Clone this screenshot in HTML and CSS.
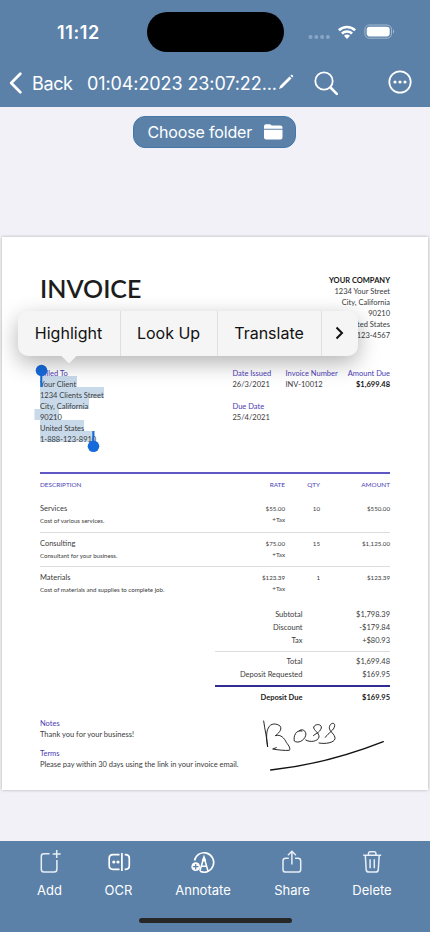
FILE: index.html
```html
<!DOCTYPE html>
<html lang="en">
<head>
<meta charset="utf-8">
<title>Invoice scan</title>
<link rel="stylesheet" href="styles.css">
</head>
<body>
<div class="app">
  <header class="top">
    <div class="status">
      <span class="clock">11:12</span>
      <span class="island"></span>
      <svg class="signals" width="90" height="20" viewBox="0 0 90 20">
        <g fill="#8aa6c6"><circle cx="3.5" cy="15" r="2"/><circle cx="9.3" cy="15" r="2"/><circle cx="15.1" cy="15" r="2"/><circle cx="20.9" cy="15" r="2"/></g>
        <g fill="none" stroke="#fff" stroke-width="2.6"><path d="M31.9 8.2a11.8 11.8 0 0 1 16.2 0"/><path d="M34.9 11.5a7.4 7.4 0 0 1 10.2 0"/></g>
        <path d="M40 17l-3-3.2a4.2 4.2 0 0 1 6 0z" fill="#fff"/>
        <rect x="57.9" y="3" width="26.6" height="13.2" rx="4.3" fill="none" stroke="#a3b9d1"/>
        <rect x="59.7" y="4.8" width="23" height="9.6" rx="2.8" fill="#fff"/>
        <path d="M86 7.6c1.6.5 1.6 3.5 0 4z" fill="#a3b9d1"/>
      </svg>
    </div>
    <nav class="nav">
      <svg class="chev" width="14" height="22" viewBox="0 0 14 22"><path d="M11.3 1.8L2.2 11l9.1 9.2" fill="none" stroke="#fff" stroke-width="2.7" stroke-linecap="round" stroke-linejoin="round"/></svg>
      <span class="back">Back</span>
      <span class="title">01:04:2023 23:07:22...</span>
      <svg class="pencil" width="16" height="16" viewBox="0 0 16 16"><path d="M1 15l1.2-3.2L11.5 2.5l2 2L4.2 13.8zM12.3 1.7l.9-.9c.9-.7 2.6.9 1.9 1.9l-.8.9z" fill="#fff"/></svg>
      <svg class="search" width="25" height="25" viewBox="0 0 25 25"><circle cx="10" cy="10" r="8.7" fill="none" stroke="#fff" stroke-width="1.8"/><path d="M16.5 16.5l6.3 6.3" stroke="#fff" stroke-width="2.6" stroke-linecap="round"/></svg>
      <svg class="more" width="24" height="24" viewBox="0 0 24 24"><circle cx="12" cy="12" r="10.7" fill="none" stroke="#fff" stroke-width="1.7"/><g fill="#fff"><circle cx="7" cy="12" r="1.6"/><circle cx="12" cy="12" r="1.6"/><circle cx="17" cy="12" r="1.6"/></g></svg>
    </nav>
  </header>

  <main class="stage">
    <button class="folder"><span>Choose folder</span>
      <svg width="19" height="16" viewBox="0 0 19 16"><path d="M0 4.7V2.3Q0 .3 2 .3h3.7q.8 0 1.4.6l.6.6h8.700q2.100 0 2.100 2.100v1.100zM0 5.700h18.500v7.800q0 2.100-2.100 2.100H2.100Q0 15.600 0 13.500z" fill="#fff"/></svg>
    </button>

    <article class="paper">
      <section class="head">
        <h1>INVOICE</h1>
        <address><b>YOUR COMPANY</b><br>1234 Your Street<br>City, California<br>90210<br>United States<br>1-888-123-4567</address>
      </section>

      <section class="meta">
        <svg class="selection" width="72" height="68" viewBox="0 0 72 68"><path d="M6 0h37v11h27v11h-15v11H25v11h25v11h11v11H6V44H.5V33H6z" fill="#c8daea"/></svg>
        <div class="client"><span class="label">Billed To</span><br>Your Client<br>1234 Clients Street<br>City, California<br>90210<br>United States<br>1-888-123-8910</div>
        <div class="dates"><span class="label">Date Issued</span><br>26/3/2021<br><br><span class="label">Due Date</span><br>25/4/2021</div>
        <div class="number"><span class="label">Invoice Number</span><br>INV-10012</div>
        <div class="due"><span class="label">Amount Due</span><br><b>$1,699.48</b></div>
        <svg class="handles" width="66" height="90" viewBox="0 0 66 90"><g fill="#166bdb"><circle cx="6.500" cy="6.500" r="5.800"/><path d="M5.300 6h2v17h-2zM57.300 67h2v14h-2z"/><circle cx="58.500" cy="82.300" r="5.800"/></g></svg>
      </section>

      <section class="items">
        <div class="row columns"><span>DESCRIPTION</span><span>RATE</span><span>QTY</span><span>AMOUNT</span></div>
        <div class="row item"><div><p>Services</p><small>Cost of various services.</small></div><span>$55.00<br>+Tax</span><span>10</span><span>$550.00</span></div>
        <div class="row item"><div><p>Consulting</p><small>Consultant for your business.</small></div><span>$75.00<br>+Tax</span><span>15</span><span>$1,125.00</span></div>
        <div class="row item"><div><p>Materials</p><small>Cost of materials and supplies to complete job.</small></div><span>$123.39<br>+Tax</span><span>1</span><span>$123.39</span></div>
      </section>

      <section class="totals">
        <div><span>Subtotal</span><span>$1,798.39</span></div>
        <div><span>Discount</span><span>-$179.84</span></div>
        <div><span>Tax</span><span>+$80.93</span></div>
        <div class="total"><span>Total</span><span>$1,699.48</span></div>
        <div><span>Deposit Requested</span><span>$169.95</span></div>
        <div class="deposit"><span>Deposit Due</span><span>$169.95</span></div>
      </section>

      <section class="notes">
        <p><span class="label">Notes</span><br>Thank you for your business!</p>
        <p><span class="label">Terms</span><br>Please pay within 30 days using the link in your invoice email.</p>
      </section>

      <svg class="signature" width="124" height="54" viewBox="140 235 372 162"><g fill="none" stroke="#111" stroke-width="2.700" stroke-linecap="round" stroke-linejoin="round"><path d="M145 241C149 270 155 294 157 319C153 299 152 272 159 262C165 247 184 247 195 257C201 268 188 279 180 285C197 280 207 293 213 305C221 316 226 323 222 329C206 330 190 328 172 325L183 321"/><path d="M260 271C240 266 234 289 237 301C247 309 266 301 271 285C275 269 258 263 252 270M271 298C283 306 308 303 311 289C312 276 294 269 295 259C301 248 320 250 318 262C313 277 299 279 294 285M311 307C330 311 357 306 359 294C360 280 341 273 342 260C344 246 359 244 358 255C356 270 340 275 330 290"/><path d="M166 388C278 376 385 350 504 303" stroke-width="4"/></g></svg>
    </article>

    <div class="popover">
      <span>Highlight</span><span>Look Up</span><span>Translate</span>
      <span><svg width="9" height="14" viewBox="0 0 9 14"><path d="M1.500 1.500L7 7l-5.500 5.500" fill="none" stroke="#111" stroke-width="2"/></svg></span>
      <svg class="tip" width="24" height="9" viewBox="0 0 24 9"><path d="M0 0h24c-4 0-5 1.500-7 3.500l-4 4q-1 1-2 0l-4-4C5 1.500 4 0 0 0z" fill="#f5f5f5"/></svg>
    </div>
  </main>

  <footer class="tabs">
    <div class="tab"><svg width="26" height="26" viewBox="0 0 26 26" fill="none" stroke="#e8eef5" stroke-width="1.500"><path d="M12.500 4.700H6.800Q4.300 4.700 4.300 7.200V20.300Q4.300 23.100 7 23.100H17.200Q19.900 23.100 19.900 20.300V11M19.700 1v8M15.700 5h8"/></svg><span>Add</span></div>
    <div class="tab"><svg width="26" height="26" viewBox="0 0 26 26" fill="none" stroke="#fff" stroke-width="1.700"><path d="M13.500 5.700H7Q3.200 5.700 3.200 9.500V16.500Q3.200 20.300 7 20.300H13.500M18.700 5.700H19.500Q23.300 5.700 23.300 9.500V16.500Q23.300 20.300 19.500 20.300H18.700M15.900 4v18"/><g fill="#fff" stroke="none"><circle cx="7.800" cy="13" r="1.600"/><circle cx="12" cy="13" r="1.600"/></g></svg><span>OCR</span></div>
    <div class="tab"><svg width="26" height="26" viewBox="0 0 26 26" fill="none" stroke="#fff" stroke-width="1.600"><path d="M4.500 11.500A9.700 9.700 0 1 1 10 22.300M14 8.200l-4.200 13.900M14 8.200l4 13.900M10.800 17.200h6.300"/><path d="M14 5.500l-2.300 6.800h4.600z" fill="#fff" stroke="none"/><circle cx="5.700" cy="17.700" r="4.400" fill="#fff" stroke="none"/><path d="M5.700 14.900v5.600M2.900 17.700h5.600" stroke="#5b81a9" stroke-width="1.200"/></svg><span>Annotate</span></div>
    <div class="tab"><svg width="26" height="26" viewBox="0 0 26 26" fill="none" stroke="#e8eef5" stroke-width="1.500"><path d="M9.800 9.200H6.700Q4 9.200 4 11.900V20.400Q4 23.100 6.700 23.100H19Q21.700 23.100 21.700 20.400V11.900Q21.700 9.200 19 9.200H16M12.900 15.500V2.500M8.900 6.200l4-4 4 4"/></svg><span>Share</span></div>
    <div class="tab"><svg width="26" height="26" viewBox="0 0 26 26" fill="none" stroke="#e8eef5" stroke-width="1.500"><path d="M4.200 6.300h18M6.300 6.300l.9 14.300q.2 2.500 2.700 2.500h6.700q2.500 0 2.700-2.500l.9-14.300M9.500 6V4.500Q9.500 2.700 11.300 2.700h3.800q1.800 0 1.800 1.800V6M11.100 10.200v9M15.300 10.200v9"/></svg><span>Delete</span></div>
    <i class="home"></i>
  </footer>
</div>
</body>
</html>
```
FILE: styles.css
```css
* { box-sizing: border-box; }
body { margin: 0; }
h1, p { margin: 0; font-weight: inherit; }

.app {
  width: 430px;
  height: 932px;
  display: flex;
  flex-direction: column;
  overflow: hidden;
  background: #f2f1f7;
  font-family: Inter, "Liberation Sans", sans-serif;
  color: #fff;
}

.top { height: 107px; background: #5b81a9; flex: none; }
.status { height: 58px; display: flex; padding: 12px 0 0 57px; }
.clock { width: 90px; font-size: 18px; font-weight: 600; line-height: 41px; letter-spacing: .6px; }
.island { width: 137px; height: 40px; border-radius: 20px; background: #000; }
.signals { margin: 10px 0 0 23px; }

.nav { height: 49px; display: flex; align-items: center; padding-left: 9px; }
.nav svg { flex: none; }
.back { width: 55px; margin: 2px 0 0 9px; font-size: 18px; letter-spacing: -.35px; }
.title { width: 191px; margin-top: 2px; font-size: 18px; letter-spacing: -.1px; white-space: nowrap; }
.pencil { margin: 0 0 1px 0; }
.search { margin: 2px 0 0 20px; }
.more { margin: 0 0 1px 49px; }

.stage { position: relative; height: 734px; padding: 9px 2px 0; }
.folder {
  display: flex;
  align-items: center;
  justify-content: space-between;
  width: 163px;
  height: 32px;
  margin: 0 auto 89px 131.4px;
  padding: 0 12px 0 13px;
  border: 1px solid #4379aa;
  border-radius: 12px;
  background: #5b81a9;
  color: #fff;
  font: 16px Inter, sans-serif;
  letter-spacing: -.15px;
  white-space: nowrap;
}

.paper {
  position: relative;
  width: 426px;
  height: 553px;
  padding: 37.5px 38px 0;
  background: #fff;
  box-shadow: 0 0 3px rgba(0, 0, 0, .28);
  font: 7.5px/11px Lato, sans-serif;
  color: #3b3b3b;
}
.paper b { color: #161616; }
.label { color: #4a3db5; }

.head { display: flex; justify-content: space-between; height: 93px; }
.head h1 { font-size: 25px; line-height: 26px; font-weight: 600; color: #1d1d1d; }
.head address { font-style: normal; text-align: right; }

.meta { position: relative; display: grid; grid-template-columns: 192.5px 53px 1fr auto; height: 105px; }
.meta > div { position: relative; }
.due { text-align: right; }
.selection { position: absolute; left: -6px; top: 8.5px; }
.handles { position: absolute; left: -5px; top: -3.5px; }

.items { margin-top: -.5px; border-top: 2px solid #6057c4; }
.row { display: grid; grid-template-columns: 195px 50px 35px 70px; text-align: right; font-size: 6.2px; }
.row > :first-child { text-align: left; }
.columns { height: 24.4px; padding-top: 5.3px; color: #4a3db5; font-size: 6.4px; }
.item { height: 33.8px; padding-top: 5px; }
.item + .item { border-top: 1px solid #ddd; }
.item p { font-size: 7.5px; line-height: 12px; }
.item small { display: block; font-size: 6.1px; line-height: 12px; }

.totals { width: 175px; margin: 9.4px 0 0 auto; line-height: 12.8px; }
.totals div { display: flex; justify-content: space-between; }
.totals span:first-child { width: 87.5px; text-align: right; }
.totals .total { margin-top: 3px; padding-top: 4.5px; border-top: 1px solid #ddd; }
.totals .deposit { margin-top: 3px; padding-top: 5.2px; border-top: 2px solid #302c91; font-weight: 700; color: #222; }

.notes { margin-top: 13.3px; }
.notes p { margin-bottom: 8px; }
.notes p + p { letter-spacing: -.03px; }
.signature { position: absolute; left: 259.7px; top: 481.8px; }

.popover {
  position: absolute;
  left: 17.5px;
  top: 204px;
  width: 340px;
  height: 44.5px;
  display: grid;
  grid-template-columns: 103px 97px 104px 36px;
  border-radius: 10px;
  background: #f5f5f5;
  box-shadow: 0 7px 22px rgba(0, 0, 0, .3);
  color: #111;
  font-size: 16px;
}
.popover span { display: flex; align-items: center; justify-content: center; border-right: 1px solid #dfdfdf; }
.popover span:last-of-type { border: 0; }
.tip { position: absolute; left: 39.5px; top: 44px; }

.tabs { position: relative; height: 91px; display: grid; grid-template-columns: 99px 39px 130px 48px 112px; background: #5b81a9; }
.tab { display: flex; flex-direction: column; align-items: center; padding-top: 8px; font-size: 13px; line-height: 18px; white-space: nowrap; }
.tab span { margin-top: 6px; }
.home { position: absolute; left: 139px; top: 77px; width: 153px; height: 5px; border-radius: 3px; background: #272727; }
```
